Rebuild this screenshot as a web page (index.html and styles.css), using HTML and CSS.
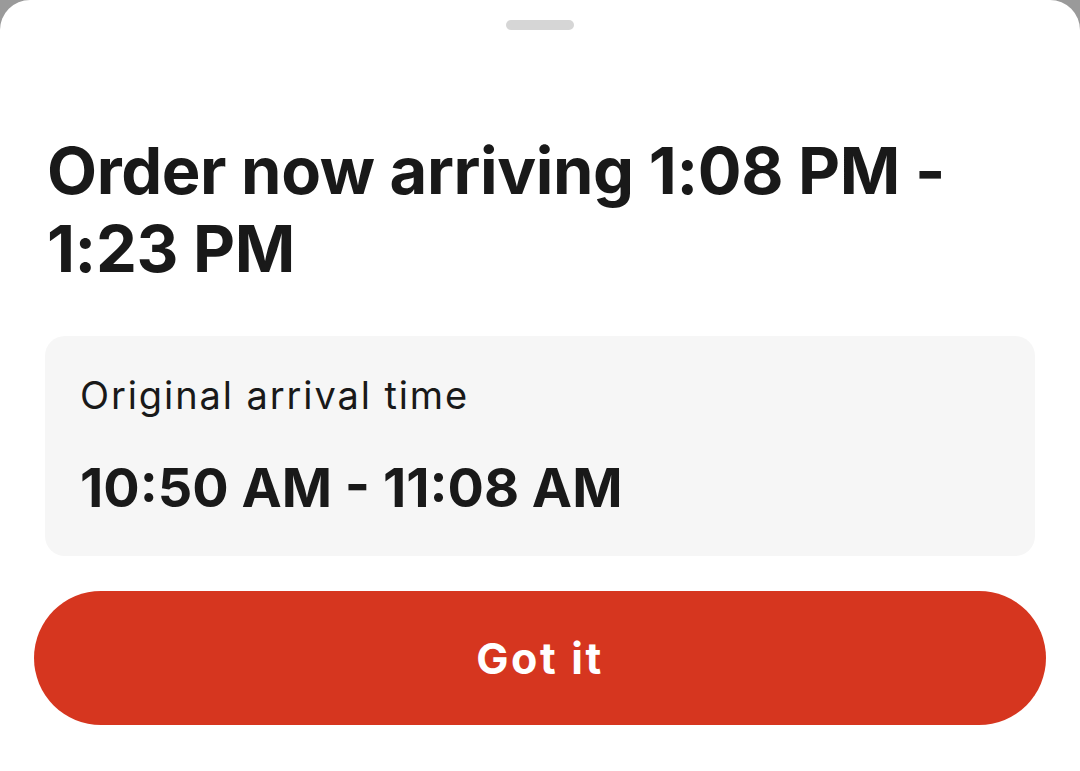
FILE: index.html
```html
<!DOCTYPE html>
<html lang="en">
<head>
<meta charset="utf-8">
<title>Order update</title>
<link rel="stylesheet" href="styles.css">
</head>
<body>
<div class="sheet">
  <div class="handle"></div>
  <h1 class="title">Order now arriving 1:08 PM - 1:23 PM</h1>
  <div class="card">
    <div class="card-label">Original arrival time</div>
    <div class="card-value">10:50 AM - 11:08 AM</div>
  </div>
  <button class="cta">Got it</button>
</div>
</body>
</html>
```

FILE: styles.css
```css
html, body {
  margin: 0;
  padding: 0;
  height: 100%;
  background: #9a9a9a;
  font-family: Inter, "Noto Sans", sans-serif;
  color: #191919;
}
.sheet {
  background: #ffffff;
  border-radius: 30px 30px 0 0;
  height: 771px;
  display: flex;
  flex-direction: column;
  overflow: hidden;
}
.handle {
  width: 68px;
  height: 10px;
  border-radius: 5px;
  background: #d6d6d6;
  margin: 20px auto 0;
  flex: none;
}
.title {
  margin: 102px 60px 0 47px;
  font-size: 65px;
  line-height: 78px;
  font-weight: 700;
  letter-spacing: -0.4px;
}
.card {
  margin: 48px 45px 0 45px;
  background: #f6f6f6;
  border-radius: 20px;
  padding: 37px 35px 36px 35px;
  display: flex;
  flex-direction: column;
  gap: 39px;
}
.card-label {
  font-size: 38px;
  line-height: 44px;
  font-weight: 400;
  letter-spacing: 1.9px;
}
.card-value {
  font-size: 54px;
  line-height: 64px;
  font-weight: 700;
}
.cta {
  margin: 35px 34px 0 34px;
  height: 134px;
  border: none;
  border-radius: 67px;
  background: #d6361f;
  color: #ffffff;
  font-family: inherit;
  font-size: 43px;
  font-weight: 700;
  letter-spacing: 2.6px;
  flex: none;
}
```
